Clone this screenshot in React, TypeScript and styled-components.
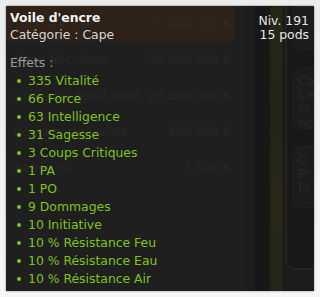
import React from "react";
import styled, { createGlobalStyle } from "styled-components";

const Global = createGlobalStyle`
  html, body { margin: 0; padding: 0; background: #f3f3f3; }
  body { font-family: "DejaVu Sans", Verdana, sans-serif; }
`;

const Page = styled.div`
  width: 320px;
  height: 297px;
  padding: 6px 6px 6px 6px;
  box-sizing: border-box;
  background: linear-gradient(#ececec, #f6f6f6);
`;

const Window = styled.div`
  position: relative;
  width: 308px;
  height: 285px;
  background: #1c1c1c;
  overflow: hidden;
  box-shadow: 0 0 2px rgba(0, 0, 0, 0.45);
  display: grid;
  grid-template-columns: 237px 25px 17px 1fr;
`;

const List = styled.div`
  display: flex;
  flex-direction: column;
  background: #1f1f1f;
`;

const Row = styled.div<{ $sel?: boolean }>`
  height: 36px;
  width: 229px;
  display: flex;
  align-items: center;
  justify-content: space-between;
  padding: 0 4px 0 8px;
  box-sizing: border-box;
  background: ${(p) => (p.$sel ? "#2d2118" : "#1f1f1f")};
  border-bottom: 1px solid #1c1c1c;
  font-size: 12.4px;
  color: ${(p) => (p.$sel ? "#35291f" : "#272727")};
`;

const Gutter = styled.div`
  background: linear-gradient(90deg, #1c1c1c 0 12px, #171717 12px);
`;

const Strip = styled.div`
  background: linear-gradient(180deg, #272719, #23241a 40%, #2a2819 70%, #22261a);
  box-shadow: inset 2px 0 2px #181810, inset -2px 0 2px #181810;
`;

const Side = styled.div`
  background: #181818;
  display: flex;
  flex-direction: column;
  gap: 17px;
  padding: 0 0 0 6px;
  border-left: 2px solid #242424;
  border-bottom: 2px solid #242424;
  border-bottom-left-radius: 10px;
  height: 262px;
`;

const SideBox = styled.div<{ $h: number; $top?: boolean }>`
  height: ${(p) => p.$h}px;
  background: #1c1c1c;
  border: 1px solid #212121;
  border-right: none;
  border-radius: ${(p) => (p.$top ? "0 0 0 8px" : "8px 0 0 8px")};
  padding: 6px 0 0 4px;
  box-sizing: border-box;
  font-size: 12.4px;
  line-height: 14px;
  color: #282828;
  overflow: hidden;
  white-space: nowrap;
`;

const Tooltip = styled.div`
  position: absolute;
  inset: 0;
  padding: 3px 5px 0 4px;
  display: flex;
  justify-content: space-between;
  align-items: flex-start;
`;

const Info = styled.div`
  display: flex;
  flex-direction: column;
`;

const Title = styled.div`
  font-weight: bold;
  font-size: 12.4px;
  line-height: 17px;
  color: #f2f2f2;
`;

const Category = styled.div`
  font-size: 12.4px;
  line-height: 17px;
  color: #d6d6d6;
`;

const EffectsLabel = styled.div`
  margin-top: 11px;
  font-size: 12.4px;
  line-height: 17px;
  color: #9c9c9c;
`;

const Effects = styled.ul`
  list-style: none;
  margin: 1px 0 0;
  padding: 0;
`;

const Effect = styled.li`
  display: flex;
  align-items: center;
  gap: 7px;
  padding-left: 7px;
  font-size: 12.4px;
  line-height: 18px;
  color: #7fc41e;
  white-space: nowrap;
  &::before {
    content: "";
    width: 4px;
    height: 4px;
    border-radius: 50%;
    background: #7fc41e;
  }
`;

const Meta = styled.div`
  text-align: right;
  font-size: 12.4px;
  line-height: 13.5px;
  color: #e6e6e6;
  padding-top: 5px;
`;

const rows = [
  ["Voile d'encre", "75 000 000 K"],
  ["Cape Séculaire", "35 000 000 K"],
  ["Coiffe du Bœuf neuf", "20 000 000 K"],
  ["Bouclier de Guilde", "800 000 K"],
  ["Renée Pa", "2 500 K"],
  ["", ""],
  ["", ""],
  ["", ""],
];

const effects = [
  "335 Vitalité",
  "66 Force",
  "63 Intelligence",
  "31 Sagesse",
  "3 Coups Critiques",
  "1 PA",
  "1 PO",
  "9 Dommages",
  "10 Initiative",
  "10 % Résistance Feu",
  "10 % Résistance Eau",
  "10 % Résistance Air",
];

export default function App() {
  return (
    <>
      <Global />
      <Page>
        <Window>
          <List>
            {rows.map(([name, price], i) => (
              <Row key={i} $sel={i === 0}>
                <span>{name}</span>
                <span>{price}</span>
              </Row>
            ))}
          </List>
          <Gutter />
          <Strip />
          <Side>
            <SideBox $h={44} $top />
            <SideBox $h={62}>
              Ca<br />Ce<br />ét<br />ne
            </SideBox>
            <SideBox $h={62}>
              Q<br />Pr<br />Pr
            </SideBox>
          </Side>
          <Tooltip>
            <Info>
              <Title>Voile d'encre</Title>
              <Category>Catégorie : Cape</Category>
              <EffectsLabel>Effets :</EffectsLabel>
              <Effects>
                {effects.map((e) => (
                  <Effect key={e}>{e}</Effect>
                ))}
              </Effects>
            </Info>
            <Meta>
              Niv. 191
              <br />
              15 pods
            </Meta>
          </Tooltip>
        </Window>
      </Page>
    </>
  );
}
